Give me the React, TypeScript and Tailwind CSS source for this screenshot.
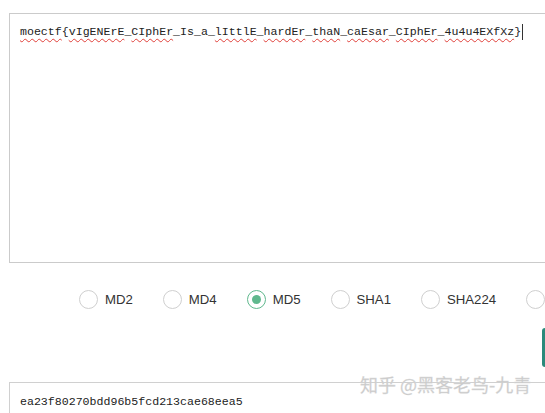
import { useState } from "react";

const mono = { fontFamily: '"Liberation Mono", "DejaVu Sans Mono", monospace' };

const words: { t: string; bad: boolean }[] = [
  { t: "moectf", bad: true },
  { t: "{", bad: false },
  { t: "vIgENErE", bad: true },
  { t: "_", bad: false },
  { t: "CIphEr", bad: true },
  { t: "_Is_a_", bad: false },
  { t: "lIttlE", bad: true },
  { t: "_", bad: false },
  { t: "hardEr", bad: true },
  { t: "_", bad: false },
  { t: "thaN", bad: true },
  { t: "_", bad: false },
  { t: "caEsar", bad: true },
  { t: "_", bad: false },
  { t: "CIphEr", bad: true },
  { t: "_", bad: false },
  { t: "4u4u4EXfXz", bad: true },
  { t: "}", bad: false },
];

// last option only shows its radio at the edge of the view
const algos = ["MD2", "MD4", "MD5", "SHA1", "SHA224", ""];

const Radio = ({ checked }: { checked: boolean }) => (
  <span
    className={
      "flex h-[19px] w-[19px] shrink-0 items-center justify-center rounded-full border-[1.5px] " +
      (checked ? "border-[#5fb88d]" : "border-[#cfcfcf]")
    }
  >
    {checked ? <span className="h-[9px] w-[9px] rounded-full bg-[#5fb88d]" /> : null}
  </span>
);

const App = () => {
  const [algo, setAlgo] = useState("MD5");

  return (
    <div className="relative h-[413px] w-[545px] overflow-hidden bg-white">
      {/* input */}
      <div className="ml-[9px] mt-[13px] h-[250px] w-[600px] border border-[#cbcbcb] px-[10px] pt-[10px]">
        <div className="flex items-center text-[11.6px] leading-[16px] text-[#222]" style={mono}>
          {words.map((w, i) =>
            w.bad ? (
              <span
                key={i}
                className="underline decoration-[#e0403a] decoration-wavy decoration-[1px] underline-offset-[3px]"
              >
                {w.t}
              </span>
            ) : (
              <span key={i}>{w.t}</span>
            )
          )}
          <span className="ml-[1px] h-[16px] w-[1px] bg-[#333]" />
        </div>
      </div>

      {/* algorithm options */}
      <div
        className="mt-[27px] flex items-center gap-[30px] pl-[79px] text-[13.2px] text-[#333]"
        style={{ fontFamily: '"Liberation Sans", Arial, sans-serif' }}
      >
        {algos.map((a, i) => (
          <label
            key={i}
            className="flex shrink-0 cursor-pointer items-center gap-[7px]"
            onClick={() => setAlgo(a)}
          >
            <Radio checked={algo === a} />
            {a ? <span>{a}</span> : null}
          </label>
        ))}
      </div>

      {/* button, mostly off screen */}
      <div className="mt-[18px] pl-[542px]">
        <button className="h-[39px] w-[100px] rounded-[3px] bg-[#2a8a7b]" />
      </div>

      {/* output */}
      <div className="ml-[9px] mt-[9px] h-[60px] w-[600px] border border-[#d0d0d0] px-[10px] pt-[11px]">
        <div className="text-[11.6px] leading-[16px] text-[#222]" style={mono}>
          ea23f80270bdd96b5fcd213cae68eea5
        </div>
      </div>

      {/* watermark */}
      <div
        className="absolute left-[360px] top-[373px] whitespace-nowrap text-[18px] leading-[22px] text-[#cacaca]"
        style={{ fontFamily: '"Noto Sans CJK SC", "Noto Sans", sans-serif', WebkitTextStroke: "0.3px #dcdcdc" }}
      >
        知乎 @黑客老鸟-九青
      </div>
    </div>
  );
};

export default App;
